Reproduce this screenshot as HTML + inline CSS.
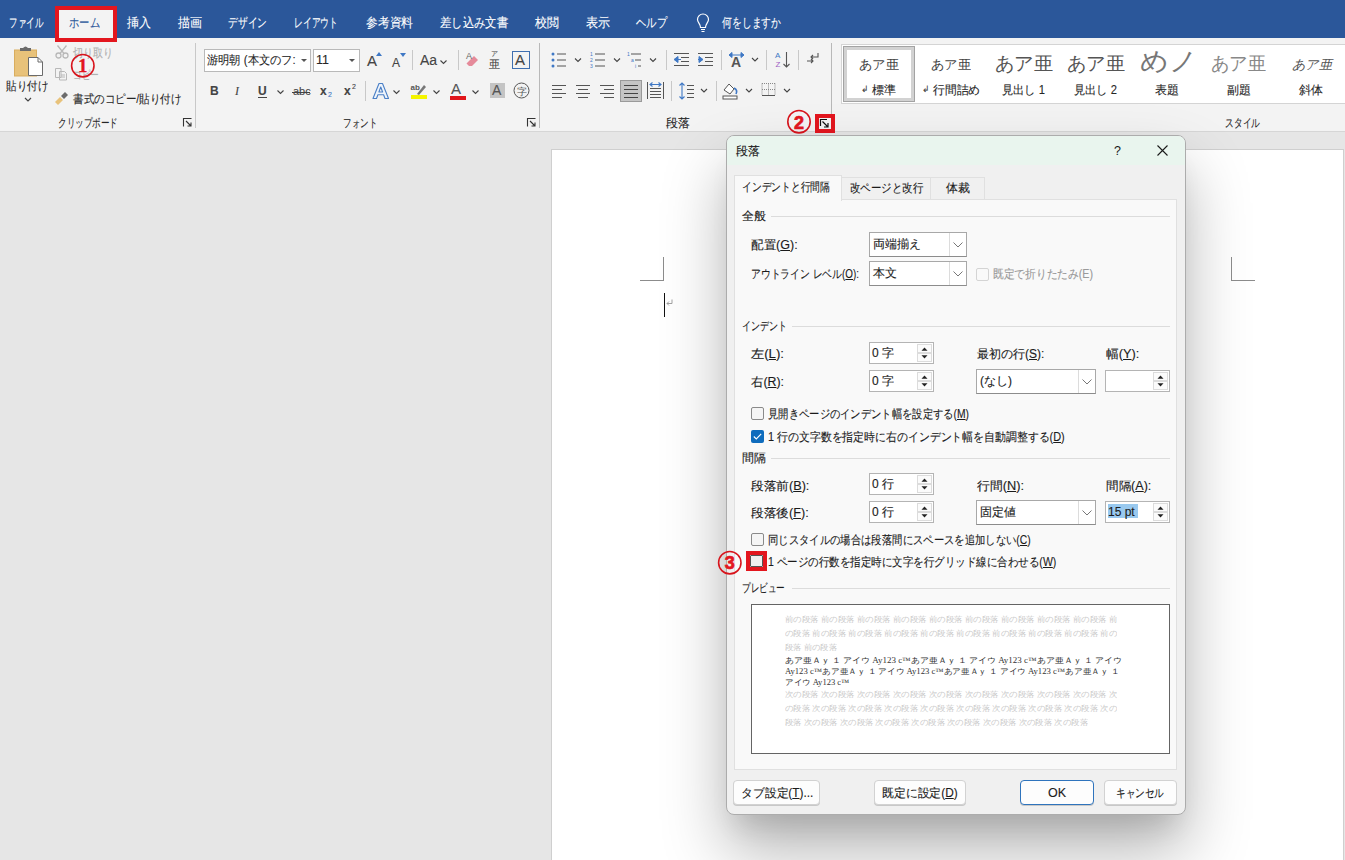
<!DOCTYPE html>
<html><head><meta charset="utf-8">
<style>
*{box-sizing:border-box;margin:0;padding:0}
html,body{width:1345px;height:860px;overflow:hidden;background:#e6e6e6;font-family:"Liberation Sans",sans-serif;color:#262626;position:relative}
.a{position:absolute;white-space:nowrap}
.fit{transform-origin:0 50%}
#tabs{left:0;top:0;width:1345px;height:38px;background:#2b579a}
#tabs .t{position:absolute;top:15px;font-size:13px;color:#fff;line-height:15px}
#ribbon{left:0;top:38px;width:1345px;height:94px;background:#f3f3f3;border-bottom:1px solid #d6d6d6}
.sep{position:absolute;width:1px;background:#c8c8c8}
.gl{position:absolute;top:78px;font-size:12px;color:#262626;line-height:14px}
.red{position:absolute;border:4px solid #e3161e}
#page{left:551px;top:149px;width:793px;height:720px;background:#fff;border:1px solid #cfcfcf}
#dlg{left:726px;top:135px;width:460px;height:680px;background:#f0f0f0;border:1px solid #acacac;border-radius:8px;box-shadow:0 36px 64px rgba(0,0,0,.29),0 20px 24px -10px rgba(0,0,0,.10)}
.d{position:absolute;white-space:nowrap;font-size:12px;line-height:14px;color:#1b1b1b;-webkit-text-stroke:0.12px currentColor}
u{text-decoration:underline;text-underline-offset:1px}
svg{position:absolute;overflow:visible}
span{-webkit-text-stroke:0.1px currentColor}
</style></head><body>
<div id="tabs" class="a">
 <span class="t fit" style="transform:scaleX(0.6538);left:9px" fw="34">ファイル</span>
 <span class="t fit" style="transform:scaleX(0.9231);left:127px" fw="24">挿入</span>
 <span class="t fit" style="transform:scaleX(0.9231);left:178px" fw="24">描画</span>
 <span class="t fit" style="transform:scaleX(0.7500);left:228px" fw="39">デザイン</span>
 <span class="t fit" style="transform:scaleX(0.6769);left:294px" fw="44">レイアウト</span>
 <span class="t fit" style="transform:scaleX(0.9038);left:366px" fw="47">参考資料</span>
 <span class="t fit" style="transform:scaleX(0.8718);left:440px" fw="68">差し込み文書</span>
 <span class="t fit" style="transform:scaleX(0.9231);left:535px" fw="24">校閲</span>
 <span class="t fit" style="transform:scaleX(0.9231);left:586px" fw="24">表示</span>
 <span class="t fit" style="transform:scaleX(0.7949);left:636px" fw="31">ヘルプ</span>
 <svg style="left:696px;top:13px" width="14" height="20" viewBox="0 0 14 20"><path d="M4.5 14.5 C4.5 11 1.5 9.5 1.5 6.5 A5.5 5.5 0 0 1 12.5 6.5 C12.5 9.5 9.5 11 9.5 14.5 Z M5 16.5 H9 M5.5 18.5 H8.5" fill="none" stroke="#fff" stroke-width="1.2"/></svg>
 <span class="t fit" style="transform:scaleX(0.7564);left:722px" fw="59">何をしますか</span>
</div>
<div id="ribbon" class="a"></div>
<!-- home tab -->
<div class="a" style="left:56px;top:7px;width:60px;height:32px;background:#f3f3f3"></div>
<span class="a fit" style="transform:scaleX(0.7949);left:69px;top:15px;font-size:13px;line-height:15px;color:#2b579a" fw="31">ホーム</span>
<div class="red" style="left:55px;top:6px;width:62px;height:36px"></div>

<!-- CLIPBOARD -->
<svg style="left:13px;top:45px" width="30" height="32" viewBox="0 0 30 32">
 <rect x="1.5" y="5" width="22" height="26" fill="#e8c27a" stroke="#d9ad5e" stroke-width="1"/>
 <path d="M7 6 V3 H10 Q12.5 0 15 3 H18 V6 Z" fill="#6b6b6b"/>
 <path d="M15.5 12.5 H25 L29.5 17 V30.5 H15.5 Z" fill="#fff" stroke="#6b6b6b" stroke-width="1"/>
 <path d="M25 12.5 V17 H29.5" fill="none" stroke="#6b6b6b" stroke-width="1"/>
</svg>
<span class="a fit" style="transform:scaleX(0.8750);left:6px;top:79px;font-size:12px;line-height:14px" fw="42">貼り付け</span>
<svg style="left:24px;top:97px" width="8" height="5" viewBox="0 0 8 5"><path d="M1 1 L4 4 L7 1" fill="none" stroke="#444" stroke-width="1.2"/></svg>
<svg style="left:55px;top:45px" width="14" height="14" viewBox="0 0 14 14"><circle cx="3.5" cy="10.5" r="2.5" fill="none" stroke="#b8b8b8" stroke-width="1.3"/><circle cx="10.5" cy="10.5" r="2.5" fill="none" stroke="#b8b8b8" stroke-width="1.3"/><path d="M5 8.5 L11.5 0.5 M9 8.5 L2.5 0.5" stroke="#b8b8b8" stroke-width="1.3"/></svg>
<span class="a fit" style="transform:scaleX(0.8333);left:73px;top:46px;font-size:12px;line-height:14px;color:#b0b0b0" fw="40">切り取り</span>
<svg style="left:54px;top:67px" width="14" height="14" viewBox="0 0 14 14"><path d="M1.5 1.5 H7 V10.5 H1.5 Z M5.5 4.5 H10.5 L12.5 6.5 V13 H5.5 Z" fill="#f3f3f3" stroke="#b8b8b8" stroke-width="1"/><path d="M7 8 H11 M7 10 H11" stroke="#b8b8b8"/></svg>
<span class="a fit" style="transform:scaleX(0.7222);left:73px;top:68px;font-size:12px;line-height:14px;color:#b0b0b0" fw="26">コピー</span>
<svg style="left:54px;top:90px" width="16" height="16" viewBox="0 0 16 16"><path d="M1 12 L6 7 L9 10 L4 15 Z" fill="#e8c27a"/><path d="M7 6 L11 2 L14 5 L10 9 Z" fill="#6b6b6b"/></svg>
<span class="a fit" style="transform:scaleX(0.8780);left:73px;top:92px;font-size:12px;line-height:14px" fw="108">書式のコピー/貼り付け</span>
<span class="gl fit" style="transform:scaleX(0.7143);left:58px;top:116px" fw="60">クリップボード</span>
<svg style="left:183px;top:118px" width="9" height="9" viewBox="0 0 9 9"><path d="M0.5 8.5 V0.5 H8.5" fill="none" stroke="#333" stroke-width="1.1"/><path d="M3 3 L8 8 M4.5 8 H8 V4.5" fill="none" stroke="#333" stroke-width="1.1"/></svg>
<div class="sep" style="left:195px;top:43px;height:85px"></div>
<!-- FONT -->
<div class="a" style="left:204px;top:49px;width:107px;height:23px;background:#fff;border:1px solid #b9b9b9"></div>
<span class="a fit" style="transform:scaleX(0.9368);left:207px;top:53px;font-size:12px;line-height:14px" fw="89">游明朝 (本文のフ:</span>
<svg style="left:301px;top:59px" width="6" height="4" viewBox="0 0 6 4"><path d="M0 0 H6 L3 3 Z" fill="#555"/></svg>
<div class="a" style="left:313px;top:49px;width:47px;height:23px;background:#fff;border:1px solid #b9b9b9"></div>
<span class="a" style="left:316px;top:53px;font-size:12.5px;line-height:14px">11</span>
<svg style="left:349px;top:59px" width="6" height="4" viewBox="0 0 6 4"><path d="M0 0 H6 L3 3 Z" fill="#555"/></svg>
<span class="a" style="left:367px;top:53px;font-size:15px;line-height:16px;color:#444">A</span>
<svg style="left:376px;top:52px" width="6" height="4" viewBox="0 0 6 4"><path d="M0 4 H6 L3 0 Z" fill="#3f78c5"/></svg>
<span class="a" style="left:392px;top:56px;font-size:12px;line-height:14px;color:#444">A</span>
<svg style="left:400px;top:53px" width="6" height="4" viewBox="0 0 6 4"><path d="M0 0 H6 L3 4 Z" fill="#3f78c5"/></svg>
<div class="sep" style="left:412px;top:50px;height:20px"></div>
<span class="a" style="left:420px;top:52px;font-size:14px;line-height:16px;color:#444">Aa</span>
<svg style="left:440px;top:60px" width="7" height="4" viewBox="0 0 7 4"><path d="M0.5 0.5 L3.5 3.5 L6.5 0.5" fill="none" stroke="#444" stroke-width="1.1"/></svg>
<div class="sep" style="left:458px;top:50px;height:20px"></div>
<svg style="left:465px;top:51px" width="16" height="16" viewBox="0 0 16 16"><path d="M4 15 L1.5 12.5 L9 5 L13 9 L7 15 Z" fill="#e58a9a"/><text x="1" y="8" font-size="9" fill="#666" font-family="Liberation Sans">A</text></svg>
<span class="a" style="left:491px;top:50px;font-size:7px;line-height:8px;color:#444">ア</span>
<span class="a" style="left:489px;top:58px;font-size:11px;line-height:12px;color:#444">亜</span>
<div class="a" style="left:512px;top:51px;width:18px;height:18px;border:1px solid #3f6fb0"></div>
<span class="a" style="left:515px;top:52px;font-size:15px;line-height:16px;color:#444">A</span>
<!-- row 2 -->
<span class="a" style="left:210px;top:84px;font-size:12px;line-height:14px;font-weight:bold;color:#444">B</span>
<span class="a" style="left:235px;top:84px;font-size:12px;line-height:14px;font-style:italic;font-family:'Liberation Serif',serif;color:#444">I</span>
<span class="a" style="left:258px;top:84px;font-size:12px;line-height:14px;font-weight:bold;color:#444">U</span>
<div class="a" style="left:258px;top:97px;width:9px;height:1px;background:#444"></div>
<svg style="left:277px;top:90px" width="7" height="4" viewBox="0 0 7 4"><path d="M0.5 0.5 L3.5 3.5 L6.5 0.5" fill="none" stroke="#444" stroke-width="1.1"/></svg>
<span class="a" style="left:293px;top:85px;font-size:11px;line-height:13px;color:#444">abc</span>
<div class="a" style="left:292px;top:92px;width:18px;height:1px;background:#444"></div>
<span class="a" style="left:320px;top:84px;font-size:12px;line-height:14px;font-weight:bold;color:#444">x</span>
<span class="a" style="left:328px;top:91px;font-size:7px;line-height:8px;color:#3f78c5">2</span>
<span class="a" style="left:344px;top:84px;font-size:12px;line-height:14px;font-weight:bold;color:#444">x</span>
<span class="a" style="left:352px;top:83px;font-size:7px;line-height:8px;color:#444">2</span>
<div class="sep" style="left:365px;top:81px;height:20px"></div>
<svg style="left:372px;top:82px" width="18" height="18" viewBox="0 0 18 18"><path d="M1 16.5 L7 1.5 H10.5 L16.5 16.5 H13 L11.6 12.8 H5.9 L4.5 16.5 Z M6.9 10 H10.6 L8.75 5 Z" fill="#eef4fb" fill-rule="evenodd" stroke="#4a7fc6" stroke-width="1.1" stroke-linejoin="round"/></svg>
<svg style="left:393px;top:90px" width="7" height="4" viewBox="0 0 7 4"><path d="M0.5 0.5 L3.5 3.5 L6.5 0.5" fill="none" stroke="#444" stroke-width="1.1"/></svg>
<svg style="left:410px;top:82px" width="18" height="18" viewBox="0 0 18 18"><text x="0.5" y="8" font-size="8" fill="#555" font-family="Liberation Sans" font-weight="bold">ab</text><path d="M7 12 L14 3 L16 5 L9 13 Z" fill="#777"/><rect x="1" y="13" width="16" height="4" fill="#f5f500"/></svg>
<svg style="left:433px;top:90px" width="7" height="4" viewBox="0 0 7 4"><path d="M0.5 0.5 L3.5 3.5 L6.5 0.5" fill="none" stroke="#444" stroke-width="1.1"/></svg>
<span class="a" style="left:451px;top:81px;font-size:15px;line-height:16px;color:#555">A</span>
<div class="a" style="left:450px;top:96px;width:16px;height:4px;background:#e0161b"></div>
<svg style="left:472px;top:90px" width="7" height="4" viewBox="0 0 7 4"><path d="M0.5 0.5 L3.5 3.5 L6.5 0.5" fill="none" stroke="#444" stroke-width="1.1"/></svg>
<div class="a" style="left:490px;top:83px;width:15px;height:15px;background:#c4c4c4"></div>
<span class="a" style="left:492px;top:82px;font-size:14px;line-height:16px;color:#555">A</span>
<svg style="left:513px;top:82px" width="17" height="17" viewBox="0 0 17 17"><circle cx="8.5" cy="8.5" r="7.5" fill="none" stroke="#555" stroke-width="1"/><text x="3.5" y="12.5" font-size="10" fill="#555">字</text></svg>
<span class="gl fit" style="transform:scaleX(0.7083);left:343px;top:116px" fw="34">フォント</span>
<svg style="left:527px;top:118px" width="9" height="9" viewBox="0 0 9 9"><path d="M0.5 8.5 V0.5 H8.5" fill="none" stroke="#333" stroke-width="1.1"/><path d="M3 3 L8 8 M4.5 8 H8 V4.5" fill="none" stroke="#333" stroke-width="1.1"/></svg>
<div class="sep" style="left:539px;top:43px;height:85px;background:#b8b8b8"></div>
<!-- PARAGRAPH -->
<svg style="left:551px;top:51px" width="110" height="18" viewBox="0 0 110 18">
 <g fill="#3f78c5"><circle cx="2" cy="3" r="1.5"/><circle cx="2" cy="9" r="1.5"/><circle cx="2" cy="15" r="1.5"/></g>
 <g stroke="#555" stroke-width="1"><path d="M6 3 H15 M6 9 H15 M6 15 H15"/></g>
 <path d="M24 7.5 L27 10.5 L30 7.5" fill="none" stroke="#444" stroke-width="1.1"/>
 <g fill="#3f78c5" font-size="5" font-family="Liberation Sans"><text x="39" y="5">1</text><text x="39" y="11">2</text><text x="39" y="17">3</text></g>
 <g stroke="#555" stroke-width="1"><path d="M44 3 H54 M44 9 H54 M44 15 H54"/></g>
 <path d="M63 7.5 L66 10.5 L69 7.5" fill="none" stroke="#444" stroke-width="1.1"/>
 <g fill="#3f78c5" font-size="5" font-family="Liberation Sans"><text x="76" y="5">1</text><text x="80" y="11">a</text><text x="84" y="17">i</text></g>
 <g stroke="#555" stroke-width="1"><path d="M80 3 H90 M84 9 H90 M87 15 H90"/></g>
 <path d="M99 7.5 L102 10.5 L105 7.5" fill="none" stroke="#444" stroke-width="1.1"/>
</svg>
<div class="sep" style="left:666px;top:50px;height:20px"></div>
<svg style="left:673px;top:51px" width="42" height="18" viewBox="0 0 42 18">
 <g stroke="#555" stroke-width="1"><path d="M1 2.5 H16 M8 6.5 H16 M8 10.5 H16 M1 14.5 H16"/></g>
 <path d="M1 8.5 L5 5.5 V11.5 Z M4 8.5 H8" fill="#3f78c5" stroke="#3f78c5"/>
 <g stroke="#555" stroke-width="1"><path d="M25 2.5 H40 M32 6.5 H40 M32 10.5 H40 M25 14.5 H40"/></g>
 <path d="M30 8.5 L26 5.5 V11.5 Z M25 8.5 H29" fill="#3f78c5" stroke="#3f78c5"/>
</svg>
<div class="sep" style="left:721px;top:50px;height:20px"></div>
<svg style="left:728px;top:50px" width="30" height="20" viewBox="0 0 30 20">
 <text x="3" y="17" font-size="14" font-weight="bold" fill="#555" font-family="Liberation Sans">A</text>
 <path d="M1 5 L4 2.5 V7.5 Z M16 5 L13 2.5 V7.5 Z M3 5 H14" fill="#3f78c5" stroke="#3f78c5" stroke-width="1"/>
 <path d="M24 8 L27 11 L30 8" fill="none" stroke="#444" stroke-width="1.1"/>
</svg>
<div class="sep" style="left:766px;top:50px;height:20px"></div>
<svg style="left:775px;top:50px" width="18" height="20" viewBox="0 0 18 20">
 <text x="0" y="8" font-size="8" fill="#3f78c5" font-family="Liberation Sans">A</text>
 <text x="0.5" y="17" font-size="8" fill="#9f5fc4" font-family="Liberation Sans">Z</text>
 <path d="M11.5 2 V17 M8.5 14 L11.5 17 L14.5 14" fill="none" stroke="#555" stroke-width="1.1"/>
</svg>
<div class="sep" style="left:798px;top:50px;height:20px"></div>
<svg style="left:806px;top:52px" width="14" height="14" viewBox="0 0 14 14"><path d="M12 1 V5 H5 M7 3 L5 5 L7 7 M1 9 H7 M5 7 L7 9 L5 11" fill="none" stroke="#555" stroke-width="1.1"/></svg>
<!-- row2 paragraph -->
<svg style="left:551px;top:83px" width="70" height="16" viewBox="0 0 70 16">
 <g stroke="#555" stroke-width="1"><path d="M1 2.5 H15 M1 6.5 H11 M1 10.5 H15 M1 14.5 H11"/>
 <path d="M25 2.5 H39 M27 6.5 H37 M25 10.5 H39 M27 14.5 H37"/>
 <path d="M49 2.5 H63 M53 6.5 H63 M49 10.5 H63 M53 14.5 H63"/></g>
</svg>
<div class="a" style="left:620px;top:80px;width:22px;height:22px;background:#c5c5c5;border:1px solid #9a9a9a"></div>
<svg style="left:623px;top:83px" width="16" height="16" viewBox="0 0 16 16"><g stroke="#444" stroke-width="1"><path d="M1 2.5 H15 M1 6.5 H15 M1 10.5 H15 M1 14.5 H15"/></g></svg>
<svg style="left:647px;top:81px" width="17" height="19" viewBox="0 0 17 19"><g stroke="#555" stroke-width="1"><path d="M0.5 1 V18 M16.5 1 V18 M3 7.5 H14 M3 10.5 H14 M3 13.5 H14 M3 16.5 H14"/></g><path d="M3 3.5 H14 M5.5 1.5 L3 3.5 L5.5 5.5 M11.5 1.5 L14 3.5 L11.5 5.5" fill="none" stroke="#3f78c5" stroke-width="1.1"/></svg>
<div class="sep" style="left:671px;top:81px;height:20px"></div>
<svg style="left:678px;top:81px" width="30" height="20" viewBox="0 0 30 20"><path d="M4 2 V18 M1.5 4.5 L4 2 L6.5 4.5 M1.5 15.5 L4 18 L6.5 15.5" fill="none" stroke="#3f78c5" stroke-width="1.1"/><g stroke="#555" stroke-width="1"><path d="M9 4.5 H16 M9 8.5 H16 M9 12.5 H16 M9 16.5 H16"/></g><path d="M23 8 L26 11 L29 8" fill="none" stroke="#444" stroke-width="1.1"/></svg>
<div class="sep" style="left:716px;top:81px;height:20px"></div>
<svg style="left:722px;top:81px" width="32" height="20" viewBox="0 0 32 20"><path d="M2 9 L7 3 L12 8 L8 13 Z" fill="#fff" stroke="#555" stroke-width="1"/><path d="M12 7 Q16 9 14 13" fill="none" stroke="#3f78c5" stroke-width="1.6"/><rect x="1" y="15" width="14" height="3" fill="#fff" stroke="#555" stroke-width="1"/><path d="M24 8 L27 11 L30 8" fill="none" stroke="#444" stroke-width="1.1"/></svg>
<svg style="left:761px;top:82px" width="30" height="18" viewBox="0 0 30 18"><g stroke="#888" stroke-width="1" stroke-dasharray="1 1"><path d="M1 1.5 H14 M1 7.5 H14 M1 1.5 V13 M7.5 1.5 V13 M14 1.5 V13"/></g><path d="M1 13.5 H14" stroke="#555" stroke-width="1"/><path d="M23 7 L26 10 L29 7" fill="none" stroke="#444" stroke-width="1.1"/></svg>
<span class="gl fit" style="transform:scaleX(1.0000);left:666px;top:116px" fw="24">段落</span>
<div class="red" style="left:815px;top:114px;width:20px;height:19px"></div>
<svg style="left:820px;top:119px" width="9" height="9" viewBox="0 0 9 9"><path d="M0.5 7 V0.5 H7" fill="none" stroke="#111" stroke-width="1.2"/><path d="M2.5 2.5 L7.5 7.5 M4 8 H8 V4" fill="none" stroke="#111" stroke-width="1.2"/></svg>
<div class="sep" style="left:831px;top:43px;height:71px;background:#b8b8b8"></div><div class="sep" style="left:831px;top:133px;height:0px;background:#b8b8b8"></div>
<!-- STYLES -->
<div class="a" style="left:841px;top:44px;width:510px;height:60px;background:#fff;border:1px solid #d4d4d4"></div>
<div class="a" style="left:843px;top:46px;width:72px;height:56px;border:1px solid #a3a3a3;box-shadow:inset 0 0 0 3px #d2d2d2"></div>

<span class="a fit" style="transform:scaleX(1.0256);left:859px;top:57px;font-size:13px;line-height:15px;font-family:'Liberation Serif',serif;color:#444;-webkit-text-stroke:0" fw="40">あア亜</span>
<span class="a" style="left:861px;top:84px;font-size:9px;line-height:10px;color:#444">↲</span>
<span class="a fit" style="transform:scaleX(1.0000);left:872px;top:83px;font-size:12px;line-height:14px" fw="24">標準</span>
<span class="a fit" style="transform:scaleX(1.0256);left:931px;top:57px;font-size:13px;line-height:15px;font-family:'Liberation Serif',serif;color:#444;-webkit-text-stroke:0" fw="40">あア亜</span>
<span class="a" style="left:922px;top:84px;font-size:9px;line-height:10px;color:#444">↲</span>
<span class="a fit" style="transform:scaleX(0.9792);left:933px;top:83px;font-size:12px;line-height:14px" fw="47">行間詰め</span>
<span class="a fit" style="transform:scaleX(1.0175);left:995px;top:53px;font-size:19px;line-height:22px;font-family:'Liberation Serif',serif;color:#555;-webkit-text-stroke:0" fw="58">あア亜</span>
<span class="a fit" style="transform:scaleX(0.9348);left:1002px;top:83px;font-size:12px;line-height:14px" fw="43">見出し 1</span>
<span class="a fit" style="transform:scaleX(1.0175);left:1067px;top:53px;font-size:19px;line-height:22px;font-family:'Liberation Serif',serif;color:#555;-webkit-text-stroke:0" fw="58">あア亜</span>
<span class="a fit" style="transform:scaleX(0.9348);left:1074px;top:83px;font-size:12px;line-height:14px" fw="43">見出し 2</span>
<span class="a fit" style="transform:scaleX(1.0741);left:1140px;top:48px;font-size:26px;line-height:28px;font-family:'Liberation Serif',serif;color:#777;-webkit-text-stroke:0" fw="58">めノ</span>
<span class="a fit" style="transform:scaleX(1.0000);left:1155px;top:83px;font-size:12px;line-height:14px" fw="24">表題</span>
<span class="a fit" style="transform:scaleX(0.9649);left:1211px;top:53px;font-size:19px;line-height:22px;font-family:'Liberation Serif',serif;color:#888;-webkit-text-stroke:0" fw="55">あア亜</span>
<span class="a fit" style="transform:scaleX(1.0000);left:1227px;top:83px;font-size:12px;line-height:14px" fw="24">副題</span>
<span class="a fit" style="transform:scaleX(1.0256);left:1292px;top:57px;font-size:13px;line-height:15px;font-family:'Liberation Serif',serif;color:#555;font-style:italic;-webkit-text-stroke:0" fw="40">あア亜</span>
<span class="a fit" style="transform:scaleX(1.0000);left:1299px;top:83px;font-size:12px;line-height:14px" fw="24">斜体</span>
<span class="gl fit" style="transform:scaleX(0.7292);left:1225px;top:116px" fw="35">スタイル</span>
<!-- circled numbers -->
<svg style="left:68px;top:51px" width="30" height="30" viewBox="0 0 30 30"><circle cx="14.8" cy="14.7" r="11.2" fill="none" stroke="#d8141c" stroke-width="1.6"/><text x="14.8" y="21.3" text-anchor="middle" font-size="18" font-weight="bold" font-family="Liberation Serif" fill="#e3161e" stroke="#e3161e" stroke-width="0.5">1</text></svg>
<svg style="left:784px;top:107px" width="30" height="30" viewBox="0 0 30 30"><circle cx="15" cy="14.7" r="11.2" fill="none" stroke="#d8141c" stroke-width="1.6"/><text x="15" y="21.5" text-anchor="middle" font-size="18" font-weight="bold" font-family="Liberation Sans" fill="#e3161e" stroke="#e3161e" stroke-width="0.7">2</text></svg>
<div id="page" class="a"></div>
<div class="a" style="left:663px;top:257px;width:1px;height:24px;background:#8c8c8c"></div>
<div class="a" style="left:640px;top:280px;width:24px;height:1px;background:#8c8c8c"></div>
<div class="a" style="left:1231px;top:257px;width:1px;height:24px;background:#8c8c8c"></div>
<div class="a" style="left:1231px;top:280px;width:24px;height:1px;background:#8c8c8c"></div>
<div class="a" style="left:664px;top:293px;width:1px;height:24px;background:#111"></div>
<svg style="left:666px;top:299px" width="7" height="7" viewBox="0 0 7 7"><path d="M6 0.5 V4.5 H1 M3 2.5 L1 4.5 L3 6.5" fill="none" stroke="#999" stroke-width="0.9"/></svg>

<div id="dlg" class="a"></div>
<div class="a" style="left:727px;top:136px;width:458px;height:29px;background:#e9f5ee;border-radius:7px 7px 0 0"></div>
<span class="d fit" style="transform:scaleX(1.0000);left:736px;top:144px" fw="24">段落</span><span class="a" style="left:1114px;top:144px;font-size:12.5px;line-height:14px;color:#1a1a1a;-webkit-text-stroke:0">?</span><svg style="left:1157px;top:145px" width="11" height="11" viewBox="0 0 11 11"><path d="M0.5 0.5 L10.5 10.5 M10.5 0.5 L0.5 10.5" stroke="#1a1a1a" stroke-width="1.1"/></svg><div class="a" style="left:841px;top:177px;width:90px;height:23px;background:#f0f0f0;border:1px solid #e0e0e0;border-bottom:none"></div><div class="a" style="left:930px;top:177px;width:55px;height:23px;background:#f0f0f0;border:1px solid #e0e0e0;border-bottom:none"></div><div class="a" style="left:734px;top:199px;width:443px;height:571px;background:#f9f9f9;border:1px solid #e0e0e0"></div><div class="a" style="left:734px;top:175px;width:108px;height:26px;background:#f9f9f9;border:1px solid #e0e0e0;border-bottom:none"></div><span class="d fit" style="transform:scaleX(0.8148);left:742px;top:180px" fw="88">インデントと行間隔</span><span class="d fit" style="transform:scaleX(0.8690);left:850px;top:181px" fw="73">改ページと改行</span><span class="d fit" style="transform:scaleX(1.0000);left:946px;top:181px" fw="24">体裁</span><span class="d fit" style="transform:scaleX(1.0000);left:742px;top:209px" fw="24">全般</span><div class="a" style="left:771px;top:216px;width:399px;height:1px;background:#dcdcdc"></div><span class="d fit" style="transform:scaleX(1.0444);left:751px;top:238px" fw="47">配置(<u>G</u>):</span><div class="a" style="left:869px;top:232px;width:98px;height:25px;background:#fff;border:1px solid #a8a8a8;border-bottom-color:#8c8c8c"></div><span class="d" style="left:873px;top:237px">両端揃え</span><div class="a" style="left:949px;top:233px;width:17px;height:23px;border-left:1px solid #dcdcdc;background:#fff"></div><svg style="left:953px;top:242px" width="10" height="6" viewBox="0 0 10 6"><path d="M0.5 0.5 L5 5 L9.5 0.5" fill="none" stroke="#777" stroke-width="1"/></svg><span class="d fit" style="transform:scaleX(0.8182);left:751px;top:267px" fw="108">アウトライン レベル(<u>O</u>):</span><div class="a" style="left:869px;top:261px;width:98px;height:25px;background:#fff;border:1px solid #a8a8a8;border-bottom-color:#8c8c8c"></div><span class="d" style="left:873px;top:266px">本文</span><div class="a" style="left:949px;top:262px;width:17px;height:23px;border-left:1px solid #dcdcdc;background:#fff"></div><svg style="left:953px;top:271px" width="10" height="6" viewBox="0 0 10 6"><path d="M0.5 0.5 L5 5 L9.5 0.5" fill="none" stroke="#777" stroke-width="1"/></svg><div class="a" style="left:976px;top:268px;width:13px;height:13px;background:#f9f9f9;border:1px solid #d4d4d4;border-radius:2px"></div><span class="d fit" style="transform:scaleX(0.8929);left:993px;top:267px;color:#9a9a9a" fw="100">既定で折りたたみ(E)</span><span class="d fit" style="transform:scaleX(0.7500);left:742px;top:319px" fw="45">インデント</span><div class="a" style="left:792px;top:326px;width:378px;height:1px;background:#dcdcdc"></div><span class="d fit" style="transform:scaleX(1.1000);left:751px;top:347px" fw="33">左(<u>L</u>):</span><div class="a" style="left:869px;top:342px;width:65px;height:22px;background:#fff;border:1px solid #b4b4b4"></div><span class="d" style="left:872px;top:346px">0 字</span><div class="a" style="left:917px;top:344px;width:15px;height:9px;background:#fbfbfb;border:1px solid #dcdcdc"></div><div class="a" style="left:917px;top:353px;width:15px;height:9px;background:#fbfbfb;border:1px solid #dcdcdc"></div><svg style="left:921px;top:347px" width="7" height="4" viewBox="0 0 7 4"><path d="M0.5 3.8 H6.5 L3.5 0.4 Z" fill="#222"/></svg><svg style="left:921px;top:355px" width="7" height="4" viewBox="0 0 7 4"><path d="M0.5 0.2 H6.5 L3.5 3.6 Z" fill="#222"/></svg><span class="d fit" style="transform:scaleX(1.0312);left:751px;top:375px" fw="33">右(<u>R</u>):</span><div class="a" style="left:869px;top:370px;width:65px;height:22px;background:#fff;border:1px solid #b4b4b4"></div><span class="d" style="left:872px;top:374px">0 字</span><div class="a" style="left:917px;top:372px;width:15px;height:9px;background:#fbfbfb;border:1px solid #dcdcdc"></div><div class="a" style="left:917px;top:381px;width:15px;height:9px;background:#fbfbfb;border:1px solid #dcdcdc"></div><svg style="left:921px;top:375px" width="7" height="4" viewBox="0 0 7 4"><path d="M0.5 3.8 H6.5 L3.5 0.4 Z" fill="#222"/></svg><svg style="left:921px;top:383px" width="7" height="4" viewBox="0 0 7 4"><path d="M0.5 0.2 H6.5 L3.5 3.6 Z" fill="#222"/></svg><span class="d fit" style="transform:scaleX(1.0000);left:977px;top:347px" fw="67">最初の行(<u>S</u>):</span><span class="d fit" style="transform:scaleX(1.0645);left:1106px;top:347px" fw="33">幅(<u>Y</u>):</span><div class="a" style="left:976px;top:369px;width:120px;height:25px;background:#fff;border:1px solid #a8a8a8;border-bottom-color:#8c8c8c"></div><span class="d" style="left:980px;top:374px">(なし)</span><div class="a" style="left:1078px;top:370px;width:17px;height:23px;border-left:1px solid #dcdcdc;background:#fff"></div><svg style="left:1082px;top:379px" width="10" height="6" viewBox="0 0 10 6"><path d="M0.5 0.5 L5 5 L9.5 0.5" fill="none" stroke="#777" stroke-width="1"/></svg><div class="a" style="left:1105px;top:370px;width:65px;height:22px;background:#fff;border:1px solid #b4b4b4"></div><div class="a" style="left:1153px;top:372px;width:15px;height:9px;background:#fbfbfb;border:1px solid #dcdcdc"></div><div class="a" style="left:1153px;top:381px;width:15px;height:9px;background:#fbfbfb;border:1px solid #dcdcdc"></div><svg style="left:1157px;top:375px" width="7" height="4" viewBox="0 0 7 4"><path d="M0.5 3.8 H6.5 L3.5 0.4 Z" fill="#222"/></svg><svg style="left:1157px;top:383px" width="7" height="4" viewBox="0 0 7 4"><path d="M0.5 0.2 H6.5 L3.5 3.6 Z" fill="#222"/></svg><div class="a" style="left:751px;top:407px;width:13px;height:13px;background:#f5f5f5;border:1px solid #8a8a8a;border-radius:2px"></div><span class="d fit" style="transform:scaleX(0.8590);left:768px;top:407px" fw="201">見開きページのインデント幅を設定する(<u>M</u>)</span><div class="a" style="left:751px;top:430px;width:13px;height:13px;background:#0f6cbd;border-radius:2px"></div><svg style="left:753px;top:433px" width="9" height="7" viewBox="0 0 9 7"><path d="M0.8 3.5 L3.3 6 L8.2 0.8" fill="none" stroke="#fff" stroke-width="1.1"/></svg><span class="d fit" style="transform:scaleX(0.9083);left:768px;top:430px" fw="297">1 行の文字数を指定時に右のインデント幅を自動調整する(<u>D</u>)</span><span class="d fit" style="transform:scaleX(1.0000);left:742px;top:451px" fw="24">間隔</span><div class="a" style="left:771px;top:458px;width:399px;height:1px;background:#dcdcdc"></div><span class="d fit" style="transform:scaleX(1.0545);left:751px;top:479px" fw="58">段落前(<u>B</u>):</span><div class="a" style="left:869px;top:473px;width:65px;height:22px;background:#fff;border:1px solid #b4b4b4"></div><span class="d" style="left:872px;top:477px">0 行</span><div class="a" style="left:917px;top:475px;width:15px;height:9px;background:#fbfbfb;border:1px solid #dcdcdc"></div><div class="a" style="left:917px;top:484px;width:15px;height:9px;background:#fbfbfb;border:1px solid #dcdcdc"></div><svg style="left:921px;top:478px" width="7" height="4" viewBox="0 0 7 4"><path d="M0.5 3.8 H6.5 L3.5 0.4 Z" fill="#222"/></svg><svg style="left:921px;top:486px" width="7" height="4" viewBox="0 0 7 4"><path d="M0.5 0.2 H6.5 L3.5 3.6 Z" fill="#222"/></svg><span class="d fit" style="transform:scaleX(1.0545);left:751px;top:506px" fw="58">段落後(<u>F</u>):</span><div class="a" style="left:869px;top:501px;width:65px;height:22px;background:#fff;border:1px solid #b4b4b4"></div><span class="d" style="left:872px;top:505px">0 行</span><div class="a" style="left:917px;top:503px;width:15px;height:9px;background:#fbfbfb;border:1px solid #dcdcdc"></div><div class="a" style="left:917px;top:512px;width:15px;height:9px;background:#fbfbfb;border:1px solid #dcdcdc"></div><svg style="left:921px;top:506px" width="7" height="4" viewBox="0 0 7 4"><path d="M0.5 3.8 H6.5 L3.5 0.4 Z" fill="#222"/></svg><svg style="left:921px;top:514px" width="7" height="4" viewBox="0 0 7 4"><path d="M0.5 0.2 H6.5 L3.5 3.6 Z" fill="#222"/></svg><span class="d fit" style="transform:scaleX(1.0682);left:977px;top:479px" fw="47">行間(<u>N</u>):</span><span class="d fit" style="transform:scaleX(1.0465);left:1106px;top:479px" fw="45">間隔(<u>A</u>):</span><div class="a" style="left:976px;top:500px;width:120px;height:25px;background:#fff;border:1px solid #a8a8a8;border-bottom-color:#8c8c8c"></div><span class="d" style="left:980px;top:505px">固定値</span><div class="a" style="left:1078px;top:501px;width:17px;height:23px;border-left:1px solid #dcdcdc;background:#fff"></div><svg style="left:1082px;top:510px" width="10" height="6" viewBox="0 0 10 6"><path d="M0.5 0.5 L5 5 L9.5 0.5" fill="none" stroke="#777" stroke-width="1"/></svg><div class="a" style="left:1105px;top:501px;width:65px;height:22px;background:#fff;border:1px solid #b4b4b4"></div><div class="a" style="left:1108px;top:504px;width:30px;height:14px;background:#99c9ef"></div><span class="d" style="left:1108px;top:505px">15 pt</span><div class="a" style="left:1153px;top:503px;width:15px;height:9px;background:#fbfbfb;border:1px solid #dcdcdc"></div><div class="a" style="left:1153px;top:512px;width:15px;height:9px;background:#fbfbfb;border:1px solid #dcdcdc"></div><svg style="left:1157px;top:506px" width="7" height="4" viewBox="0 0 7 4"><path d="M0.5 3.8 H6.5 L3.5 0.4 Z" fill="#222"/></svg><svg style="left:1157px;top:514px" width="7" height="4" viewBox="0 0 7 4"><path d="M0.5 0.2 H6.5 L3.5 3.6 Z" fill="#222"/></svg><div class="a" style="left:751px;top:533px;width:13px;height:13px;background:#f5f5f5;border:1px solid #8a8a8a;border-radius:2px"></div><span class="d fit" style="transform:scaleX(0.8623);left:768px;top:533px" fw="263">同じスタイルの場合は段落間にスペースを追加しない(<u>C</u>)</span><div class="a" style="left:750px;top:555px;width:13px;height:12px;background:#f0f0f0;border:1px solid #555;border-radius:1px"></div><span class="d fit" style="transform:scaleX(0.8754);left:768px;top:555px" fw="288">1 ページの行数を指定時に文字を行グリッド線に合わせる(<u>W</u>)</span><div class="red" style="left:746px;top:551px;width:21px;height:20px"></div><svg style="left:715px;top:548px" width="30" height="30" viewBox="0 0 30 30"><circle cx="14.8" cy="14.7" r="11.2" fill="none" stroke="#d8141c" stroke-width="1.6"/><text x="14.8" y="21.3" text-anchor="middle" font-size="18" font-weight="bold" font-family="Liberation Sans" fill="#e3161e" stroke="#e3161e" stroke-width="0.7">3</text></svg><span class="d fit" style="transform:scaleX(0.7167);left:742px;top:581px" fw="43">プレビュー</span><div class="a" style="left:792px;top:588px;width:378px;height:1px;background:#dcdcdc"></div><div class="a" style="left:751px;top:604px;width:419px;height:150px;background:#fff;border:1px solid #646464"></div><span class="fit" style="transform:scaleX(1.0573);position:absolute;white-space:nowrap;font-family:'Liberation Serif',serif;font-size:8px;line-height:10px;-webkit-text-stroke:0;left:785px;top:615px;color:#c8c8c8" fw="332">前の段落 前の段落 前の段落 前の段落 前の段落 前の段落 前の段落 前の段落 前の段落 前</span><span class="fit" style="transform:scaleX(1.0573);position:absolute;white-space:nowrap;font-family:'Liberation Serif',serif;font-size:8px;line-height:10px;-webkit-text-stroke:0;left:785px;top:629px;color:#c8c8c8" fw="332">の段落 前の段落 前の段落 前の段落 前の段落 前の段落 前の段落 前の段落 前の段落 前の</span><span class="fit" style="transform:scaleX(1.0400);position:absolute;white-space:nowrap;font-family:'Liberation Serif',serif;font-size:8px;line-height:10px;-webkit-text-stroke:0;left:785px;top:643px;color:#c8c8c8" fw="52">段落 前の段落</span><span class="fit" style="transform:scaleX(1.1196);position:absolute;white-space:nowrap;font-family:'Liberation Serif',serif;font-size:8px;line-height:10px;-webkit-text-stroke:0;left:785px;top:656px;color:#333" fw="337">あア亜Ａｙ １ アイウ Ay123 c™あア亜Ａｙ １ アイウ Ay123 c™あア亜Ａｙ １ アイウ</span><span class="fit" style="transform:scaleX(1.0809);position:absolute;white-space:nowrap;font-family:'Liberation Serif',serif;font-size:8px;line-height:10px;-webkit-text-stroke:0;left:785px;top:667px;color:#333" fw="334">Ay123 c™あア亜Ａｙ １ アイウ Ay123 c™あア亜Ａｙ １ アイウ Ay123 c™あア亜Ａｙ １</span><span class="fit" style="transform:scaleX(1.0667);position:absolute;white-space:nowrap;font-family:'Liberation Serif',serif;font-size:8px;line-height:10px;-webkit-text-stroke:0;left:785px;top:678px;color:#333" fw="64">アイウ Ay123 c™</span><span class="fit" style="transform:scaleX(1.0573);position:absolute;white-space:nowrap;font-family:'Liberation Serif',serif;font-size:8px;line-height:10px;-webkit-text-stroke:0;left:785px;top:690px;color:#c8c8c8" fw="332">次の段落 次の段落 次の段落 次の段落 次の段落 次の段落 次の段落 次の段落 次の段落 次</span><span class="fit" style="transform:scaleX(1.0573);position:absolute;white-space:nowrap;font-family:'Liberation Serif',serif;font-size:8px;line-height:10px;-webkit-text-stroke:0;left:785px;top:704px;color:#c8c8c8" fw="332">の段落 次の段落 次の段落 次の段落 次の段落 次の段落 次の段落 次の段落 次の段落 次の</span><span class="fit" style="transform:scaleX(1.0521);position:absolute;white-space:nowrap;font-family:'Liberation Serif',serif;font-size:8px;line-height:10px;-webkit-text-stroke:0;left:785px;top:718px;color:#c8c8c8" fw="303">段落 次の段落 次の段落 次の段落 次の段落 次の段落 次の段落 次の段落 次の段落</span><div class="a" style="left:733px;top:780px;width:87px;height:25px;background:#fdfdfd;border:1px solid #d2d2d2;border-radius:4px;box-shadow:0 1px 0 #c8c8c8"></div><span class="d fit" style="transform:scaleX(0.9863);left:741px;top:786px" fw="72">タブ設定(<u>T</u>)...</span><div class="a" style="left:874px;top:780px;width:92px;height:25px;background:#fdfdfd;border:1px solid #d2d2d2;border-radius:4px;box-shadow:0 1px 0 #c8c8c8"></div><span class="d fit" style="transform:scaleX(0.9870);left:882px;top:786px" fw="76">既定に設定(<u>D</u>)</span><div class="a" style="left:1020px;top:780px;width:74px;height:25px;background:#fdfdfd;border:1.5px solid #2f74bd;border-radius:4px;box-shadow:0 1px 0 #c8c8c8"></div><span class="d" style="left:1048px;top:786px;font-size:12.5px">OK</span><div class="a" style="left:1104px;top:780px;width:73px;height:25px;background:#fdfdfd;border:1px solid #d2d2d2;border-radius:4px;box-shadow:0 1px 0 #c8c8c8"></div><span class="d fit" style="transform:scaleX(0.8000);left:1116px;top:786px" fw="48">キャンセル</span>
<script>
document.querySelectorAll('[fw]').forEach(function(e){var w=e.offsetWidth;var t=+e.getAttribute('fw');if(w>0){e.style.transform='scaleX('+(t/w)+')';}});
</script>
</body></html>
